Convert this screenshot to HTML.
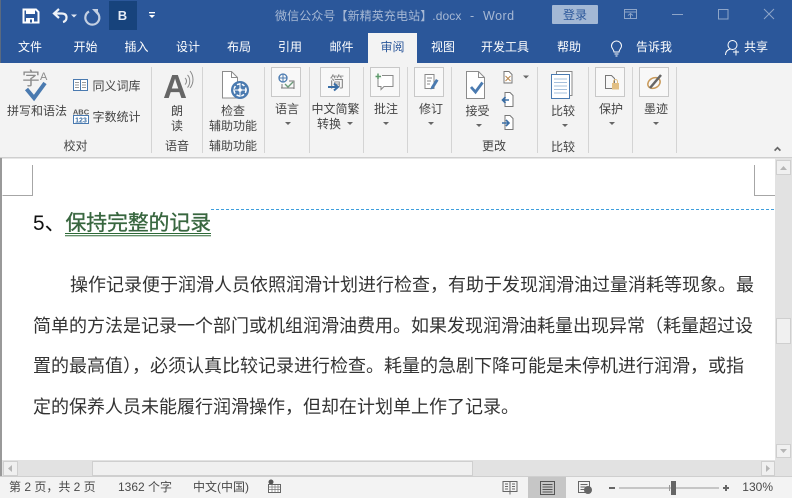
<!DOCTYPE html>
<html lang="zh"><head><meta charset="utf-8"><title>Word</title>
<style>
html,body{margin:0;padding:0;background:#fff}
#w{position:relative;width:792px;height:498px;overflow:hidden;background:#fff;font-family:"Liberation Sans","Noto Sans CJK SC",sans-serif}
svg{position:absolute;left:0;top:0}
svg text{font-family:"Liberation Sans","Noto Sans CJK SC",sans-serif;font-size:12px;fill:#444}
.t text{fill:#fff;text-anchor:middle}
.l text{text-anchor:middle}
.s text{fill:#4a4a4a}
.b{position:absolute;left:0;font-size:18px;line-height:24px;color:#333;white-space:nowrap}
</style></head><body><div id="w">
<svg width="792" height="498" viewBox="0 0 792 498">
<rect x="0" y="0" width="792" height="63" fill="#2b579a"/>
<rect x="0" y="63" width="792" height="94" fill="#f3f3f3"/>
<rect x="0" y="157" width="792" height="1.5" fill="#cfcfcf"/>
<rect x="368" y="33" width="49" height="30" fill="#f3f3f3"/>
<rect x="0" y="158" width="2" height="302" fill="#999"/>
<rect x="0" y="0" width="1" height="63" fill="#5a6a80"/>
<!-- QAT -->
<path d="M23.500 9.500h12.500l2.500 2.500v10.500h-15z" fill="none" stroke="#fff" stroke-width="2"/>
<rect x="26" y="9" width="9" height="5" fill="#fff"/><rect x="26" y="18" width="8" height="5" fill="#fff"/><rect x="30" y="19.500" width="2" height="3" fill="#2b579a"/>
<path d="M59 9l-5 4.500 5 4.500M54.500 13.500h7c4 0 5 2 5 4 0 2.500-1.500 4-3.500 4.500" fill="none" stroke="#fff" stroke-width="2.200" opacity=".92"/>
<path d="M71 14.500h6l-3 3z" fill="#dfe6f1"/>
<path d="M89 11.500a7 7 0 1 0 7 0.200" fill="none" stroke="#c3cfe2" stroke-width="2.200"/><path d="M92 9h6v6.500z" fill="#c3cfe2"/>
<rect x="109" y="1" width="28" height="29" fill="#17437c"/>
<text x="122.500" y="20" style="font-size:13px;font-weight:bold;fill:#e6ecf5;text-anchor:middle">B</text>
<rect x="149" y="12" width="6" height="1.300" fill="#fff"/><path d="M149 15h6l-3 3z" fill="#fff"/>
<!-- title -->
<text x="275" y="20" style="font-size:12px;fill:#a6b8d4;letter-spacing:.1px">微信公众号【新精英充电站】.docx</text>
<text x="470" y="20" style="font-size:12.500px;fill:#a6b8d4;letter-spacing:.5px">-</text>
<text x="483" y="20" style="font-size:12.500px;fill:#a6b8d4;letter-spacing:.5px">Word</text>
<rect x="552" y="5" width="46" height="19" rx="1" fill="#a3b8d5"/>
<text x="575" y="19" style="font-size:12px;fill:#2b579a;text-anchor:middle">登录</text>
<g fill="none" stroke="#8ea5c8" stroke-width="1">
<rect x="624.500" y="9.500" width="12" height="9"/><path d="M624.500 12h12M628 15.500l2.500-2 2.500 2M630.500 14v4"/>
<path d="M672 14.500h11"/><rect x="718.500" y="9.500" width="9.500" height="9.500"/><path d="M764 9l10 10M774 9l-10 10"/></g>
<!-- tabs -->
<g class="t">
<text x="30" y="51">文件</text><text x="85.500" y="51">开始</text><text x="136.500" y="51">插入</text><text x="188" y="51">设计</text><text x="239" y="51">布局</text><text x="290" y="51">引用</text><text x="341.500" y="51">邮件</text>
<text x="392.500" y="51" style="fill:#2b579a">审阅</text>
<text x="443" y="51">视图</text><text x="505" y="51">开发工具</text><text x="569" y="51">帮助</text><text x="654" y="51">告诉我</text><text x="756" y="51">共享</text></g>
<path d="M611.500 46c0-3 2.500-5 5-5s5 2 5 5c0 2.500-2.500 3.500-2.500 6h-5c0-2.500-2.500-3.500-2.500-6zM614.500 54h4M615.500 56h2" fill="none" stroke="#fff"/>
<circle cx="732.500" cy="45" r="4.500" fill="none" stroke="#fff"/><path d="M725.500 55c0-4 3-5.500 5-6M733 52h6M736 49.500v6" fill="none" stroke="#fff"/>
<!-- separators -->
<g fill="#d4d4d4"><rect x="151" y="67" width="1" height="86"/><rect x="202" y="67" width="1" height="86"/><rect x="264" y="67" width="1" height="86"/><rect x="309" y="67" width="1" height="86"/><rect x="363" y="67" width="1" height="86"/><rect x="407" y="67" width="1" height="86"/><rect x="451" y="67" width="1" height="86"/><rect x="537" y="67" width="1" height="86"/><rect x="588" y="67" width="1" height="86"/><rect x="632" y="67" width="1" height="86"/><rect x="676" y="67" width="1" height="86"/></g>
<!-- ribbon labels -->
<g class="l">
<text x="37" y="115">拼写和语法</text><text x="116.500" y="90">同义词库</text><text x="116.500" y="121">字数统计</text><text x="75.500" y="150">校对</text>
<text x="177" y="115">朗</text><text x="177" y="130">读</text><text x="177" y="150">语音</text>
<text x="233" y="115">检查</text><text x="233" y="130">辅助功能</text><text x="233" y="150">辅助功能</text>
<text x="287" y="113">语言</text><text x="335.500" y="113">中文简繁</text><text x="329" y="128">转换</text>
<text x="386" y="113">批注</text><text x="431" y="113">修订</text><text x="477.500" y="115">接受</text><text x="494" y="150">更改</text>
<text x="563" y="115">比较</text><text x="563" y="151">比较</text><text x="611" y="113">保护</text><text x="656" y="113">墨迹</text></g>
<g fill="#666"><path d="M285 122h6l-3 3z"/><path d="M347 122h6l-3 3z"/><path d="M383 122h6l-3 3z"/><path d="M428 122h6l-3 3z"/><path d="M476 124h6l-3 3z"/><path d="M523 75.500h6l-3 3z"/><path d="M562 124h6l-3 3z"/><path d="M609 122h6l-3 3z"/><path d="M653 122h6l-3 3z"/><path d="M774 150l3.500-3.500 3.500 3.500-1.200 1.200-2.300-2.300-2.300 2.300z"/></g>
<!-- spell icon -->
<text x="31" y="85" style="font-size:18px;fill:#8a8a8a;text-anchor:middle">字</text>
<text x="40" y="80" style="font-size:11px;fill:#8a8a8a">A</text>
<path d="M26.500 89l7.500 9 11-15" fill="none" stroke="#4a7ab0" stroke-width="4"/>
<!-- thesaurus -->
<path d="M73.500 79.500h14v11h-14zM80.500 79.500v11" fill="#fff" stroke="#4a7ab0"/><path d="M75 82.500h4M75 85h4M75 87.500h4M82 82.500h4M82 85h4M82 87.500h4" stroke="#999"/>
<text x="81" y="114.500" style="font-size:7.500px;font-weight:bold;fill:#555;text-anchor:middle">ABC</text>
<rect x="73.500" y="115.500" width="15" height="8" fill="#fff" stroke="#4a7ab0"/><text x="81" y="122.500" style="font-size:7px;font-weight:bold;fill:#3a6ea5;text-anchor:middle">123</text>
<!-- read aloud -->
<text x="175" y="98" style="font-size:33px;font-weight:bold;fill:#666;text-anchor:middle">A</text>
<path d="M185 78c2 1.500 2 4.500 0 6.500M187.500 75c3 3 3 9 0 12.500M190 71c4 5 4 12 0 17" fill="none" stroke="#8a8a8a"/>
<!-- accessibility -->
<path d="M222.500 71.500h9l6 6v20.500h-15z" fill="#fff" stroke="#8c8c8c"/><path d="M231.500 71.500v6h6" fill="none" stroke="#8c8c8c"/>
<circle cx="240" cy="90" r="9" fill="#4a7ab0"/><circle cx="240" cy="90" r="6" fill="none" stroke="#fff" stroke-width="1.500" stroke-dasharray="3 2"/><path d="M240 83v14M233 90h14" stroke="#fff"/><circle cx="240" cy="90" r="1.800" fill="#fff"/>
<!-- boxed -->
<g fill="#f8f8f8" stroke="#c8c8c8"><rect x="271.500" y="67.500" width="29" height="29"/><rect x="320.500" y="67.500" width="29" height="29"/><rect x="370.500" y="67.500" width="29" height="29"/><rect x="414.500" y="67.500" width="29" height="29"/><rect x="595.500" y="67.500" width="29" height="29"/><rect x="639.500" y="67.500" width="29" height="29"/></g>
<!-- language -->
<circle cx="283" cy="78" r="4" fill="none" stroke="#4a7ab0" stroke-width="1.300"/><path d="M279 78h8M283 74v8" stroke="#4a7ab0"/>
<path d="M282 84v4M281 88h13M289 81h5v8" fill="none" stroke="#777"/><path d="M285 84l3 3 5-5" fill="none" stroke="#6a9a78" stroke-width="1.400"/>
<!-- simp -->
<text x="337" y="87" style="font-size:15px;fill:#888;text-anchor:middle">简</text>
<path d="M328 87h10M334 83.500l4 3.500-4 3.500" fill="none" stroke="#3a6ea5" stroke-width="2"/>
<!-- comment -->
<path d="M378 75.500h15v11h-9l-3 3v-3h-3z" fill="#fff" stroke="#8a8a8a"/><rect x="374" y="72" width="8" height="7" fill="#f8f8f8"/><path d="M378 73.500v5.500M375.500 76.500h5.500" stroke="#5d9a6b" stroke-width="1.500"/>
<!-- track -->
<path d="M425 74.500h9v14h-9l0-14zM427 78h5M427 81h4M427 84h3" fill="#fff" stroke="#888"/><path d="M431 87l5-8 2.500 1.500-5 8-3 1z" fill="#4a7ab0"/>
<!-- accept -->
<path d="M466.500 71.500h12l6 6v21h-18z" fill="#fff" stroke="#8c8c8c"/><path d="M478.500 71.500v6h6" fill="none" stroke="#8c8c8c"/>
<path d="M471 87l4.500 5 7-9.500" fill="none" stroke="#4a7ab0" stroke-width="2.800"/>
<path d="M504 71.500h5l3 3v8.500h-8z" fill="#fff" stroke="#777"/><path d="M505.500 76l5 5M510.500 76l-5 5" stroke="#b9874e"/>
<path d="M505 92.500h5l3 3v11h-8z" fill="#fff" stroke="#777"/><path d="M502 100h7M505.500 97l-3 3 3 3" fill="none" stroke="#3a6ea5" stroke-width="1.600"/>
<path d="M505 115.500h5l3 3v11h-8z" fill="#fff" stroke="#777"/><path d="M502 123h7M506 120l3 3-3 3" fill="none" stroke="#3a6ea5" stroke-width="1.600"/>
<!-- compare -->
<rect x="556.500" y="71.500" width="15.500" height="24" fill="#fff" stroke="#888"/>
<rect x="551.500" y="74.500" width="18" height="24" fill="#fff" stroke="#4a7ab0"/><path d="M554 79h13M554 82.500h13M554 86h13M554 89.500h13M554 93h13" stroke="#a6c0dc"/>
<!-- protect -->
<path d="M605.500 75.500h6l3 3v10h-9z" fill="none" stroke="#777"/><rect x="612" y="83" width="7" height="6.500" fill="#e2bf84"/><path d="M613.500 83v-1.500a2 2 0 0 1 4 0v1.500" fill="none" stroke="#e2bf84"/>
<!-- ink -->
<ellipse cx="654" cy="83" rx="6.500" ry="5" fill="none" stroke="#c99a5a" stroke-width="1.500" transform="rotate(-30 654 83)"/><path d="M650 88l11-13" stroke="#666" stroke-width="2.500"/>
<!-- doc margins -->
<path d="M32.500 165v30.500h-30M754.500 165v30.500h21" fill="none" stroke="#a6a6a6"/>
<path d="M211 209.500h564" stroke="#3f9fdd" stroke-dasharray="3 2"/>
<!-- heading -->
<text x="33" y="230" style="font-size:20.800px;fill:#111">5、</text>
<text x="65.500" y="230" style="font-size:20.800px;fill:#38663f;stroke:#38663f;stroke-width:.35px">保持完整的记录</text>
<path d="M65 233.500h146M65 235.800h146" stroke="#2d6a37" stroke-width="1"/>
<!-- scrollbars -->
<rect x="775" y="158" width="17" height="319" fill="#e2e2e2"/>
<rect x="0" y="460" width="792" height="17" fill="#e2e2e2"/>
<rect x="0" y="460" width="2" height="17" fill="#999"/>
<g fill="#f0f0f0" stroke="#cfcfcf"><rect x="776.500" y="160.500" width="14" height="14"/><rect x="776.500" y="318.500" width="14" height="25"/><rect x="776.500" y="444.500" width="14" height="13"/><rect x="3.500" y="461.500" width="14" height="14"/><rect x="92.500" y="461.500" width="380" height="14"/><rect x="761.500" y="461.500" width="13" height="14"/></g>
<g fill="#b5b5b5"><path d="M780 170l3.500-4 3.500 4z"/><path d="M780 449l3.500 4 3.500-4z"/><path d="M12 465l-4 3.500 4 3.500z"/><path d="M766 465l4 3.500-4 3.500z"/></g>
<!-- status -->
<rect x="0" y="476" width="792" height="22" fill="#f3f3f3"/><rect x="0" y="476" width="792" height="1" fill="#cfcfcf"/>
<rect x="528" y="477" width="38" height="21" fill="#c6c6c6"/>
<g class="s"><text x="9" y="491">第 2 页，共 2 页</text><text x="118" y="491">1362 个字</text><text x="193" y="491">中文(中国)</text>
<text x="773" y="491" style="text-anchor:end">130%</text></g>
<circle cx="271" cy="482" r="2.500" fill="#555"/><rect x="268.500" y="484.500" width="12" height="8" fill="#fff" stroke="#666"/><path d="M269 487h11M269 489.500h11M272 485v7M275 485v7M278 485v7" stroke="#777" stroke-width=".7"/>
<path d="M503 481.500h14v10h-14zM510 481.500v13M505 484h3M505 486.500h3M505 489h3M512 484h3M512 486.500h3M512 489h3" fill="#f3f3f3" stroke="#666"/>
<path d="M540.500 481.500h14v13h-14zM542.500 484.500h10M542.500 487h10M542.500 489.500h10M542.500 492h10" fill="none" stroke="#555"/>
<path d="M578.500 481.500h11v11h-11zM580.500 484.500h7M580.500 487h5M580.500 489.500h4" fill="#f3f3f3" stroke="#666"/><circle cx="588" cy="490" r="4" fill="#666"/>
<rect x="609" y="487" width="6" height="2" fill="#666"/><rect x="619" y="487.500" width="100" height="1" fill="#999"/>
<rect x="669" y="485" width="1" height="6" fill="#999"/><rect x="671" y="481" width="5" height="14" fill="#666"/>
<path d="M723 488h6M726 485v6" stroke="#666" stroke-width="2"/>
</svg>
<div class="b" style="top:273px;left:70px">操作记录便于润滑人员依照润滑计划进行检查，有助于发现润滑油过量消耗等现象。最</div>
<div class="b" style="top:314px;left:33px">简单的方法是记录一个部门或机组润滑油费用。如果发现润滑油耗量出现异常（耗量超过设</div>
<div class="b" style="top:354px;left:33px">置的最高值），必须认真比较记录进行检查。耗量的急剧下降可能是未停机进行润滑，或指</div>
<div class="b" style="top:395px;left:33px">定的保养人员未能履行润滑操作，但却在计划单上作了记录。</div>
</div></body></html>
